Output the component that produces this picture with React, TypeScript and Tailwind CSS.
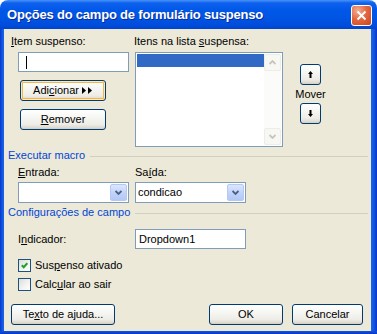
import React from 'react';

const ui = "font-['Liberation_Sans',Arial,sans-serif]";

function U({ children }: { children: React.ReactNode }) {
  return <u className="underline decoration-1 underline-offset-[1px]">{children}</u>;
}

function XPButton({
  children,
  className = '',
  focused = false,
}: {
  children: React.ReactNode;
  className?: string;
  focused?: boolean;
}) {
  return (
    <button
      type="button"
      className={`flex h-[21px] items-center justify-center rounded-[3px] border border-[#003C74] bg-[linear-gradient(to_bottom,#FFFFFF_0%,#F7F7F4_35%,#EEEDE7_75%,#D8D3C8_100%)] text-[11px] leading-[13px] text-black ${
        focused
          ? 'shadow-[inset_0_0_0_1px_#FFE9B0,inset_0_0_0_2px_#F2B650]'
          : 'shadow-[inset_0_-1px_0_#D6D0C5]'
      } ${className}`}
    >
      {children}
    </button>
  );
}

function Chevron({ color, up = false }: { color: string; up?: boolean }) {
  return (
    <svg width="7" height="5" viewBox="0 0 7 5">
      <path
        d={up ? 'M0.5 4 L3.5 1 L6.5 4' : 'M0.5 1 L3.5 4 L6.5 1'}
        stroke={color}
        strokeWidth="1.8"
        fill="none"
      />
    </svg>
  );
}

function Combo({ value = '', className = '' }: { value?: string; className?: string }) {
  return (
    <div className={`flex h-[21px] w-[111px] border border-[#7F9DB9] bg-white p-px ${className}`}>
      <div className="flex-1 pl-[1px] leading-[17px]">{value}</div>
      <div className="flex w-[17px] items-center justify-center rounded-[2px] border border-[#B4C8F6] bg-[linear-gradient(to_bottom,#DCE6FD,#C3D4FB_50%,#B3C8F5)]">
        <Chevron color="#4D6185" />
      </div>
    </div>
  );
}

function Checkbox({ checked = false }: { checked?: boolean }) {
  return (
    <div className="flex h-[13px] w-[13px] items-center justify-center border border-[#1C5180] bg-[linear-gradient(135deg,#DCDCD7,#F4F4F1_60%,#FFFFFF)]">
      {checked && (
        <svg width="7" height="7" viewBox="0 0 7 7">
          <path d="M0.8 3.2 L2.7 5.2 L6.3 1.2" stroke="#21A121" strokeWidth="2" fill="none" />
        </svg>
      )}
    </div>
  );
}

function GroupTitle({ title, className = '' }: { title: string; className?: string }) {
  return (
    <div className={`ml-[4px] flex ${className}`}>
      <span className="text-[#0046D5]">{title}</span>
      <div className="ml-[5px] mr-[3px] mt-[7px] h-px flex-1 bg-[#D0D0BF]" />
    </div>
  );
}

function ArrowGlyph({ down = false }: { down?: boolean }) {
  return (
    <svg width="5" height="7" viewBox="0 0 5 7">
      <polygon
        points={down ? '1.5,0 3.5,0 3.5,4 5,4 2.5,7 0,4 1.5,4' : '2.5,0 5,3 3.5,3 3.5,7 1.5,7 1.5,3 0,3'}
        fill="#000"
      />
    </svg>
  );
}

export default function App() {
  return (
    <div className={`h-[334px] w-[377px] bg-white ${ui} text-[11px] leading-[13px] text-black`}>
      <div className="flex h-full flex-col overflow-hidden rounded-t-[8px]">
        {/* Title bar */}
        <div className="flex h-[29px] justify-between bg-[linear-gradient(to_bottom,#4A94F8_0%,#0F61EE_10%,#0058E8_35%,#0054E3_65%,#004CDB_88%,#0043CE_100%)] pl-[7px] pr-[5px]">
          <span className="self-center text-[13px] font-bold tracking-[-0.2px] text-white [text-shadow:1px_1px_0_#0C2C9A]">
            Opções do campo de formulário suspenso
          </span>
          <div className="mt-[5px] flex h-[21px] w-[21px] items-center justify-center rounded-[3px] border border-white bg-[radial-gradient(circle_at_30%_25%,#F2AE95_0%,#E4683F_45%,#CB4220_100%)]">
            <svg width="11" height="11" viewBox="0 0 11 11">
              <path d="M1.5 1.5 L9.5 9.5 M9.5 1.5 L1.5 9.5" stroke="#fff" strokeWidth="2" />
            </svg>
          </div>
        </div>

        <div className="flex flex-1">
          <div className="w-[4px] bg-[linear-gradient(to_right,#0B34C8,#0D56E0_50%,#1A63EA)]" />

          {/* Client area */}
          <div className="flex flex-1 flex-col bg-[#ECE9D8] pt-[6px]">
            {/* Top row */}
            <div className="flex">
              <div className="ml-[7px] flex w-[123px] flex-col">
                <span>
                  <U>I</U>tem suspenso:
                </span>
                <div className="ml-[7px] mt-[4px] flex h-[20px] w-[111px] items-center border border-[#7F9DB9] bg-white">
                  <div className="ml-[7px] h-[13px] w-px bg-black" />
                </div>
                <XPButton focused className="ml-[9px] mt-[8px] w-[86px] gap-[3px]">
                  <span>
                    Adi<U>c</U>ionar
                  </span>
                  <svg width="11" height="7" viewBox="0 0 11 7">
                    <polygon points="0,0 4,3.5 0,7" fill="#000" />
                    <polygon points="6,0 10,3.5 6,7" fill="#000" />
                  </svg>
                </XPButton>
                <XPButton className="ml-[9px] mt-[8px] w-[86px]">
                  <span>
                    <U>R</U>emover
                  </span>
                </XPButton>
              </div>

              <div className="flex flex-col">
                <span>
                  Itens na lista <U>s</U>uspensa:
                </span>
                <div className="ml-[1px] mt-[4px] flex h-[95px] w-[148px] border border-[#7F9DB9] bg-white p-px">
                  <div className="flex-1">
                    <div className="h-[13px] bg-[#316AC5]" />
                  </div>
                  <div className="flex w-[17px] flex-col justify-between bg-[#FBFBF9]">
                    <div className="flex h-[17px] items-center justify-center rounded-[2px] border border-[#EEEDE5] bg-[#F7F7F3]">
                      <Chevron color="#C8C6BA" up />
                    </div>
                    <div className="flex h-[17px] items-center justify-center rounded-[2px] border border-[#EEEDE5] bg-[#F7F7F3]">
                      <Chevron color="#C8C6BA" />
                    </div>
                  </div>
                </div>
              </div>

              <div className="ml-[12px] flex w-[31px] flex-col items-center pt-[29px]">
                <XPButton className="h-[20px] w-[21px]">
                  <ArrowGlyph />
                </XPButton>
                <span className="mt-[3px]">Mover</span>
                <XPButton className="mt-[2px] h-[20px] w-[21px]">
                  <ArrowGlyph down />
                </XPButton>
              </div>
            </div>

            {/* Executar macro */}
            <GroupTitle title="Executar macro" className="mt-[2px]" />
            <div className="ml-[14px] mt-[4px] flex">
              <div className="flex w-[117px] flex-col">
                <span>
                  <U>E</U>ntrada:
                </span>
                <Combo className="mt-[3px]" />
              </div>
              <div className="flex flex-col">
                <span>
                  Sa<U>í</U>da:
                </span>
                <Combo value="condicao" className="mt-[3px]" />
              </div>
            </div>

            {/* Configurações de campo */}
            <GroupTitle title="Configurações de campo" className="mt-[3px]" />
            <div className="ml-[14px] mt-[10px] flex items-center">
              <span className="w-[117px]">
                I<U>n</U>dicador:
              </span>
              <div className="flex h-[20px] w-[111px] items-center border border-[#7F9DB9] bg-white pl-[3px]">
                Dropdown1
              </div>
            </div>
            <div className="ml-[14px] mt-[10px] flex items-center gap-[4px]">
              <Checkbox checked />
              <span>
                Sus<U>p</U>enso ativado
              </span>
            </div>
            <div className="ml-[14px] mt-[6px] flex items-center gap-[4px]">
              <Checkbox />
              <span>
                Calc<U>u</U>lar ao sair
              </span>
            </div>

            {/* Bottom buttons */}
            <div className="ml-[7px] mr-[8px] mt-[13px] flex">
              <XPButton className="w-[104px]">
                <span>
                  Te<U>x</U>to de ajuda...
                </span>
              </XPButton>
              <div className="flex-1" />
              <XPButton className="w-[74px]">OK</XPButton>
              <XPButton className="ml-[9px] w-[71px]">Cancelar</XPButton>
            </div>
          </div>

          <div className="w-[6px] bg-[linear-gradient(to_left,#0B34C8,#0D56E0_50%,#1A63EA)]" />
        </div>
        <div className="h-[3px] bg-[linear-gradient(to_top,#0B34C8,#0D56E0)]" />
      </div>
    </div>
  );
}
